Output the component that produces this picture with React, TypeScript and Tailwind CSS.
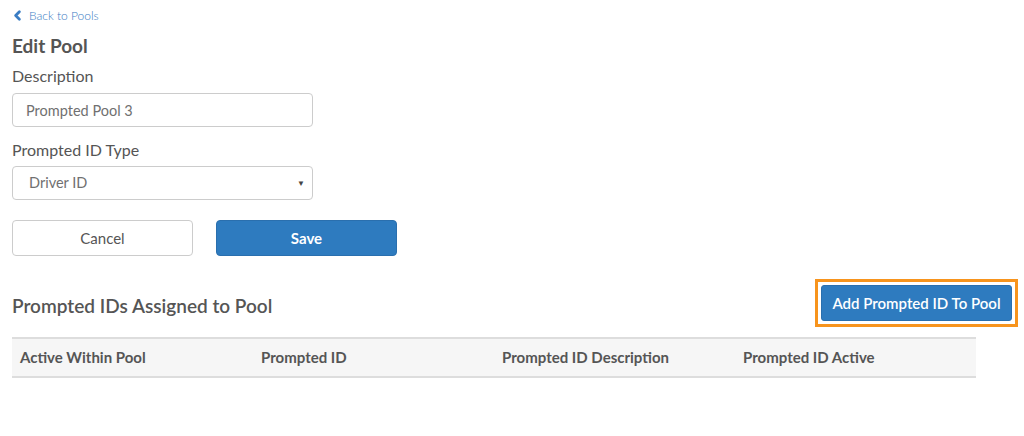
import { ChevronLeft } from "lucide-react"

const columns = [
    "Active Within Pool",
    "Prompted ID",
    "Prompted ID Description",
    "Prompted ID Active",
]

const App = () => {
    return (
        <div className="min-h-[436px] bg-white pl-3 pr-1.5 font-['Lato','Open_Sans',sans-serif] text-[#555]">
            <a
                href="#"
                className="flex h-[30px] items-center gap-[4px] pt-px text-[12px] font-light text-[#3a7dc4]"
            >
                <ChevronLeft size={15} strokeWidth={4.5} className="-ml-[2px]" />
                Back to Pools
            </a>

            <h2 className="mt-[2px] text-[19px] leading-[28px] font-bold text-[#555]">
                Edit Pool
            </h2>

            <label className="mt-[6px] block text-[16px] leading-[20px]">
                Description
            </label>
            <input
                type="text"
                defaultValue="Prompted Pool 3"
                className="mt-[7px] block h-[34px] w-[301px] rounded-[4px] border border-[#ccc] px-[13px] text-[14.5px] text-[#707070] outline-none"
            />

            <label className="mt-[13px] block text-[16px] leading-[20px]">
                Prompted ID Type
            </label>
            <div className="relative mt-[6px] h-[34px] w-[301px]">
                <select
                    defaultValue="driver"
                    className="h-full w-full appearance-none rounded-[4px] border border-[#ccc] bg-white px-[16px] text-[14.5px] text-[#707070] outline-none"
                >
                    <option value="driver">Driver ID</option>
                </select>
                <span className="pointer-events-none absolute top-[11px] right-[8px] text-[8px] text-[#444]">
                    ▼
                </span>
            </div>

            <div className="mt-[20px] flex gap-[23px]">
                <button className="h-[36px] w-[181px] rounded-[4px] border border-[#ccc] bg-white text-[15px] text-[#555]">
                    Cancel
                </button>
                <button className="h-[36px] w-[181px] rounded-[4px] border border-[#2a6fae] bg-[#2e7bbf] text-[15px] font-bold text-white">
                    Save
                </button>
            </div>

            <div className="mt-[23px] flex items-center justify-between">
                <h3 className="pt-[6px] text-[19px] font-semibold text-[#555]">
                    Prompted IDs Assigned to Pool
                </h3>
                <div className="border-[3px] border-[#f7941d] p-[3px]">
                    <button className="h-[36px] w-[191px] rounded-[3px] border border-[#2a6fae] bg-[#2e7bbf] text-[15px] font-semibold text-white">
                        Add Prompted ID To Pool
                    </button>
                </div>
            </div>

            <div className="mt-[10px] grid h-[41px] w-[964px] grid-cols-4 items-center border-y-2 border-[#ddd] bg-[#f6f6f6] text-[15px] font-bold text-[#555]">
                {columns.map((c) => (
                    <div key={c} className="px-2">
                        {c}
                    </div>
                ))}
            </div>
        </div>
    )
}

export default App
